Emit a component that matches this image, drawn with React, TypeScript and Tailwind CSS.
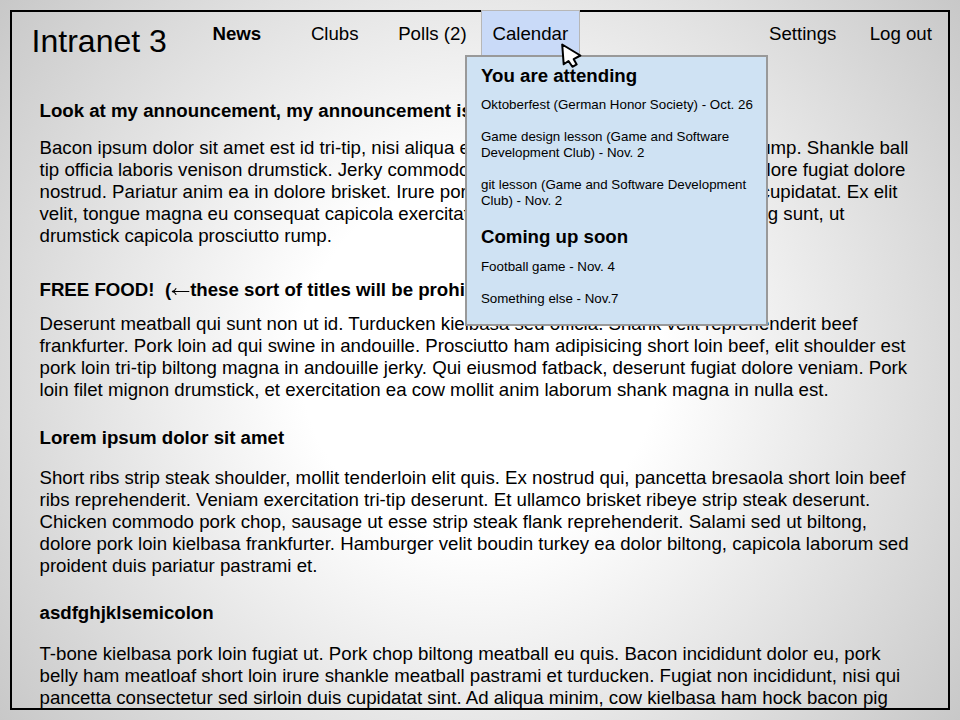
import React from "react";

type Line = string | { head: string; tail: string; width: string };

function LeftArrow() {
  return (
    <svg className="inline-block align-top" width="19" height="22" viewBox="0 0 19 22" role="img" aria-label="←">
      <path d="M1 12.5 H18.3 M5.2 9.2 Q4 11.8 1 12.5 Q4 13.2 5.2 15.8" fill="none" stroke="#000" strokeWidth="1.1" />
    </svg>
  );
}

const posts: { title: React.ReactNode; gap: string; lines: Line[] }[] = [
  {
    title: "Look at my announcement, my announcement is amazing",
    gap: "mt-[15px] mb-[32px]",
    lines: [
      { head: "Bacon ipsum dolor sit amet est id tri-tip, nisi aliqua enim", tail: "rump. Shankle ball", width: "w-[869px]" },
      { head: "tip officia laboris venison drumstick. Jerky commodo", tail: "dolore fugiat dolore", width: "w-[866px]" },
      { head: "nostrud. Pariatur anim ea in dolore brisket. Irure pork", tail: "cupidatat. Ex elit", width: "w-[858px]" },
      { head: "velit, tongue magna eu consequat capicola exercitation", tail: "adipisicing sunt, ut", width: "w-[805px]" },
      "drumstick capicola prosciutto rump.",
    ],
  },
  {
    title: (
      <>
        FREE FOOD!&nbsp; (<LeftArrow />these sort of titles will be prohibited)
      </>
    ),
    gap: "mt-[12px] mb-[26px]",
    lines: [
      "Deserunt meatball qui sunt non ut id. Turducken kielbasa sed officia. Shank velit reprehenderit beef",
      "frankfurter. Pork loin ad qui swine in andouille. Prosciutto ham adipisicing short loin beef, elit shoulder est",
      "pork loin tri-tip biltong magna in andouille jerky. Qui eiusmod fatback, deserunt fugiat dolore veniam. Pork",
      "loin filet mignon drumstick, et exercitation ea cow mollit anim laborum shank magna in nulla est.",
    ],
  },
  {
    title: "Lorem ipsum dolor sit amet",
    gap: "mt-[18px] mb-[25px]",
    lines: [
      "Short ribs strip steak shoulder, mollit tenderloin elit quis. Ex nostrud qui, pancetta bresaola short loin beef",
      "ribs reprehenderit. Veniam exercitation tri-tip deserunt. Et ullamco brisket ribeye strip steak deserunt.",
      "Chicken commodo pork chop, sausage ut esse strip steak flank reprehenderit. Salami sed ut biltong,",
      "dolore pork loin kielbasa frankfurter. Hamburger velit boudin turkey ea dolor biltong, capicola laborum sed",
      "proident duis pariatur pastrami et.",
    ],
  },
  {
    title: "asdfghjklsemicolon",
    gap: "mt-[19px]",
    lines: [
      "T-bone kielbasa pork loin fugiat ut. Pork chop biltong meatball eu quis. Bacon incididunt dolor eu, pork",
      "belly ham meatloaf short loin irure shankle meatball pastrami et turducken. Fugiat non incididunt, nisi qui",
      "pancetta consectetur sed sirloin duis cupidatat sint. Ad aliqua minim, cow kielbasa ham hock bacon pig",
    ],
  },
];

function CalendarMenu() {
  return (
    <div className="absolute left-[-17px] top-[44px] h-[271px] w-[303px] border-2 border-[#999] bg-[#cfe2f3] pl-[14px] pt-[8px] text-[13.333px] leading-4">
      <h2 className="text-[18.667px] font-bold leading-[22px]">You are attending</h2>
      <p className="mt-[10px]">Oktoberfest (German Honor Society) - Oct. 26</p>
      <p className="mt-4">
        Game design lesson (Game and Software
        <br />
        Development Club) - Nov. 2
      </p>
      <p className="mt-4">
        git lesson (Game and Software Development
        <br />
        Club) - Nov. 2
      </p>
      <h2 className="mt-[17px] text-[18.667px] font-bold leading-[22px]">Coming up soon</h2>
      <p className="mt-[11px]">Football game - Nov. 4</p>
      <p className="mt-4">Something else - Nov.7</p>
    </div>
  );
}

export default function App() {
  return (
    <div className="h-[720px] w-[960px] overflow-hidden whitespace-nowrap bg-[radial-gradient(circle_at_center,#fff_0%,#fff_30%,#c8c8c8_100%)] pl-[10px] pt-[10px] font-['Liberation_Sans',Arial,sans-serif] text-[18.667px] leading-[22px] text-black">
      <div className="h-[700px] w-[940px] border-2 border-black">
        <header className="flex h-[78px] pl-[19.6px]">
          <h1 className="mt-[11px] w-[180.9px] text-[32px] leading-[36px]">Intranet 3</h1>
          <nav className="flex grow">
            <a className="mt-[11px] w-[98.4px] font-bold">News</a>
            <a className="mt-[11px] w-[87.3px]">Clubs</a>
            <a className="mt-[11px] w-[82.8px]">Polls (2)</a>
            <div className="relative -mt-[2px] h-[46px] w-[99px] border border-[#b7b7b7] bg-[#c9daf8]">
              <a className="block pl-[10.5px] pt-[12px]">Calendar</a>
              <CalendarMenu />
              <svg className="absolute left-[79px] top-[32px]" width="26" height="30" viewBox="0 0 26 30">
                <path d="M1.2 1.5 L2.7 21.3 L7.5 18 L11.4 23.8 L15.7 21.4 L12.7 16.2 L19.4 12.5 Z" fill="#fff" stroke="#000" strokeWidth="2" strokeLinejoin="round" />
              </svg>
            </div>
            <a className="ml-[189px] mt-[11px] w-[100.7px]">Settings</a>
            <a className="mt-[11px]">Log out</a>
          </nav>
        </header>
        <main className="pl-[27.5px] pt-[10px]">
          {posts.map((post, i) => (
            <article key={i}>
              <h2 className="h-[22px] font-bold">{post.title}</h2>
              <div className={post.gap}>
                {post.lines.map((line, j) =>
                  typeof line === "string" ? (
                    <p key={j} className="h-[22px]">{line}</p>
                  ) : (
                    <p key={j} className={"flex h-[22px] justify-between " + line.width}>
                      <span>{line.head}</span>
                      <span>{line.tail}</span>
                    </p>
                  )
                )}
              </div>
            </article>
          ))}
        </main>
      </div>
    </div>
  );
}
